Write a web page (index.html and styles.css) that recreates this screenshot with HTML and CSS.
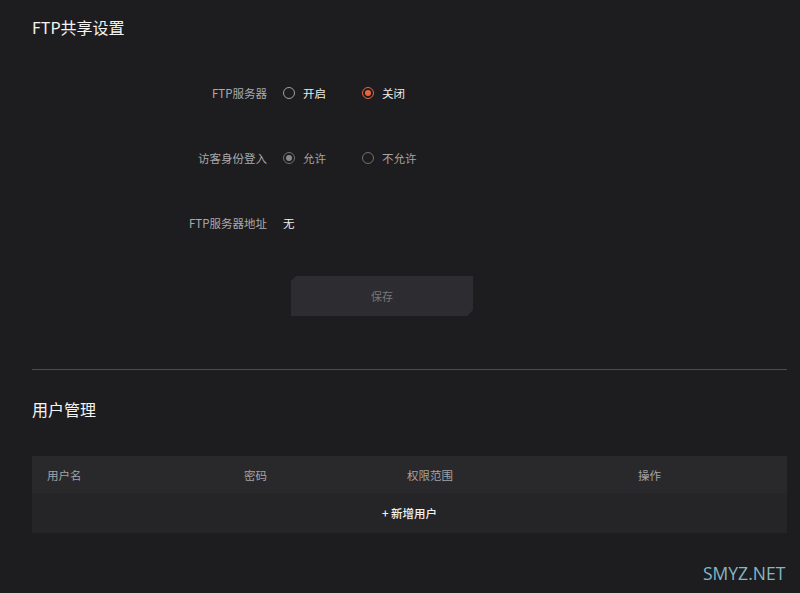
FILE: index.html
```html
<!DOCTYPE html>
<html lang="zh-CN">
<head>
<meta charset="utf-8">
<title>FTP共享设置</title>
<link rel="stylesheet" href="styles.css">
</head>
<body>
<div class="page">
  <h2 class="section-title">FTP共享设置</h2>
  <div class="form">
    <div class="row">
      <div class="label">FTP服务器</div>
      <div class="control">
        <label class="option"><span class="radio"></span><span class="opt-text">开启</span></label>
        <label class="option"><span class="radio checked"></span><span class="opt-text">关闭</span></label>
      </div>
    </div>
    <div class="row">
      <div class="label">访客身份登入</div>
      <div class="control">
        <label class="option disabled"><span class="radio checked"></span><span class="opt-text">允许</span></label>
        <label class="option disabled"><span class="radio"></span><span class="opt-text">不允许</span></label>
      </div>
    </div>
    <div class="row row-last">
      <div class="label">FTP服务器地址</div>
      <div class="control"><span class="value">无</span></div>
    </div>
    <div class="actions">
      <button class="save-btn" type="button">保存</button>
    </div>
  </div>
  <hr class="divider">
  <h2 class="section-title user-title">用户管理</h2>
  <div class="table">
    <div class="thead">
      <span>用户名</span>
      <span>密码</span>
      <span>权限范围</span>
      <span>操作</span>
    </div>
    <div class="tbody">
      <span class="add-user">+ 新增用户</span>
    </div>
  </div>
</div>
<div class="watermark">SMYZ.NET</div>
</body>
</html>
```
FILE: styles.css
```css
html, body {
  margin: 0;
  padding: 0;
  background: #1d1d20;
  height: 100%;
}
body {
  font-family: "Noto Sans CJK SC", "Noto Sans", sans-serif;
  color: #e8e8e8;
  overflow: hidden;
}
.page {
  padding: 17px 13px 0 32px;
}
.section-title {
  margin: 0;
  font-size: 16px;
  font-weight: 400;
  line-height: 20px;
  color: #f4f4f4;
}
.form {
  margin-top: 46px;
}
.row {
  display: grid;
  grid-template-columns: 235px 1fr;
  column-gap: 16px;
  height: 20px;
  align-items: center;
  margin-bottom: 45px;
  font-size: 11.5px;
}
.row.row-last {
  margin-bottom: 43px;
}
.label {
  text-align: right;
  color: #a9a9ab;
  line-height: 20px;
}
.control {
  display: flex;
  align-items: center;
  gap: 33px;
}
.option {
  display: flex;
  align-items: center;
  gap: 8px;
  color: #ececec;
  width: 46px;
  white-space: nowrap;
}
.option.disabled {
  color: #a5a5a7;
}
.radio {
  width: 12px;
  height: 12px;
  border-radius: 50%;
  border: 1px solid #a0a0a3;
  box-sizing: border-box;
  position: relative;
  flex: none;
}
.radio.checked {
  border-color: #e9643f;
}
.radio.checked::after {
  content: "";
  position: absolute;
  left: 2px;
  top: 2px;
  width: 6px;
  height: 6px;
  border-radius: 50%;
  background: #e9643f;
}
.disabled .radio {
  border-color: #6f6f72;
}
.disabled .radio.checked::after {
  background: #8a8a8d;
}
.value {
  color: #f0f0f0;
}
.actions {
  padding-left: 259px;
}
.save-btn {
  display: block;
  width: 182px;
  height: 40px;
  border: none;
  background: #2d2d31;
  color: #77777a;
  font-family: inherit;
  font-size: 11px;
  clip-path: polygon(5px 0, 100% 0, 100% calc(100% - 6px), calc(100% - 6px) 100%, 0 100%, 0 5px);
  padding: 0;
}
.divider {
  margin: 53px 0 0 0;
  border: none;
  height: 1px;
  background: #4d4d50;
}
.user-title {
  margin-top: 29px;
}
.table {
  margin-top: 37px;
  font-size: 11.5px;
}
.thead {
  display: grid;
  grid-template-columns: 197px 163px 231px 1fr;
  padding-left: 15px;
  height: 37px;
  align-items: center;
  background: #29292c;
  color: #a3a3a6;
}
.tbody {
  height: 40px;
  background: #252528;
  display: flex;
  align-items: center;
  justify-content: center;
}
.add-user {
  color: #f2f2f2;
  font-weight: 500;
}
.watermark {
  position: absolute;
  left: 703px;
  top: 561px;
  font-family: "Open Sans", "Liberation Sans", sans-serif;
  font-size: 17.5px;
  line-height: 24px;
  color: #84b6c4;
}
```
